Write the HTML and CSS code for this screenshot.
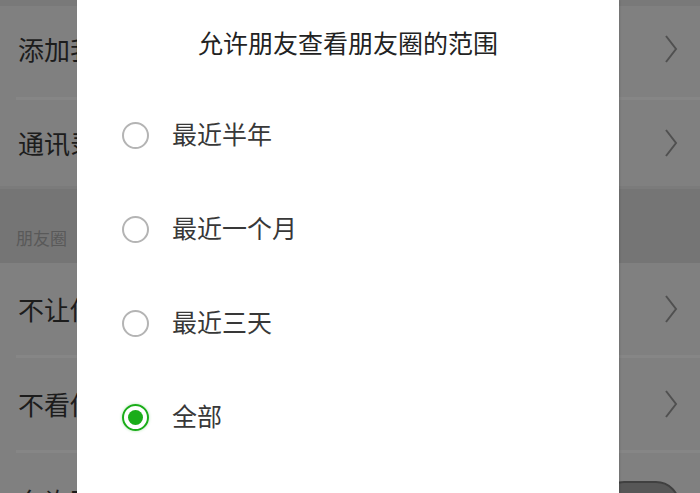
FILE: index.html
```html
<!DOCTYPE html>
<html lang="zh-CN">
<head>
<meta charset="utf-8">
<title>朋友圈权限</title>
<link rel="stylesheet" href="styles.css">
</head>
<body>
<div class="page">
  <div class="settings">
    <div class="gap-top"></div>
    <div class="row row-first">
      <span class="row-label">添加我的方式</span>
      <svg class="chevron" viewBox="0 0 14 30" width="14" height="30"><polyline points="2,2 12,15 2,28" /></svg>
    </div>
    <div class="sep"></div>
    <div class="row row-second">
      <span class="row-label">通讯录黑名单</span>
      <svg class="chevron" viewBox="0 0 14 30" width="14" height="30"><polyline points="2,2 12,15 2,28" /></svg>
    </div>
    <div class="section-head"><span>朋友圈</span></div>
    <div class="row">
      <span class="row-label">不让他(她)看</span>
      <svg class="chevron" viewBox="0 0 14 30" width="14" height="30"><polyline points="2,2 12,15 2,28" /></svg>
    </div>
    <div class="sep"></div>
    <div class="row">
      <span class="row-label">不看他(她)</span>
      <svg class="chevron" viewBox="0 0 14 30" width="14" height="30"><polyline points="2,2 12,15 2,28" /></svg>
    </div>
    <div class="sep"></div>
    <div class="row row-switch">
      <span class="row-label">允许陌生人查看十条朋友圈</span>
      <span class="switch"></span>
    </div>
  </div>

  <div class="dialog">
    <div class="dialog-title">允许朋友查看朋友圈的范围</div>
    <div class="options">
      <div class="option"><span class="radio"></span><span class="option-label">最近半年</span></div>
      <div class="option"><span class="radio"></span><span class="option-label">最近一个月</span></div>
      <div class="option"><span class="radio"></span><span class="option-label">最近三天</span></div>
      <div class="option"><span class="radio radio-checked"></span><span class="option-label">全部</span></div>
    </div>
  </div>
</div>
</body>
</html>
```

FILE: styles.css
```css
* { box-sizing: border-box; }

html, body {
  margin: 0;
  padding: 0;
}

body {
  width: 700px;
  height: 493px;
  overflow: hidden;
  font-family: "Noto Sans CJK SC", "Noto Sans", sans-serif;
  background: #808080;
}

.page {
  position: relative;
  width: 700px;
  height: 493px;
  overflow: hidden;
}

/* dimmed settings list behind the dialog */
.settings {
  display: flex;
  flex-direction: column;
}

.gap-top {
  height: 6px;
  background: #797979;
}

.row {
  height: 92px;
  flex-shrink: 0;
  display: flex;
  align-items: center;
  justify-content: space-between;
  padding: 0 22px 0 18px;
  background: #808080;
}

.row-first {
  height: 91px;
  padding-bottom: 5px;
}

.row-second {
  height: 86px;
}

.row-switch {
  align-items: flex-start;
  padding-top: 31px;
  padding-right: 20px;
}

.row-label {
  font-size: 26px;
  line-height: 34px;
  color: #1c1c1c;
  white-space: nowrap;
}

.chevron {
  display: block;
  fill: none;
  stroke: #505050;
  stroke-width: 2;
}

.sep {
  height: 3px;
  flex-shrink: 0;
  margin-left: 16px;
  background: #868686;
}

.section-head {
  height: 77px;
  flex-shrink: 0;
  background: #757575;
  display: flex;
  align-items: flex-end;
  padding: 0 0 13px 16px;
  border-top: 3px solid #7b7b7b;
}

.section-head span {
  font-size: 17px;
  line-height: 24px;
  color: #595959;
}

.switch {
  display: block;
  flex-shrink: 0;
  width: 80px;
  height: 48px;
  margin-top: -3px;
  border-radius: 24px;
  background: #575757;
  border: 2px solid #404040;
}

/* dialog on top of the dimmed page */
.dialog {
  position: absolute;
  left: 77px;
  top: 0;
  width: 542px;
  height: 493px;
  background: #fff;
  box-shadow: 1px 0 2px rgba(0, 0, 0, 0.12);
}

.dialog-title {
  margin-top: 25px;
  font-size: 25px;
  line-height: 35px;
  text-align: center;
  color: #222;
}

.options {
  margin-top: 28px;
  display: flex;
  flex-direction: column;
}

.option {
  height: 94px;
  display: flex;
  align-items: center;
  gap: 23px;
  padding-left: 45px;
}

.option-label {
  font-size: 25px;
  line-height: 35px;
  color: #383838;
  margin-top: -3px;
}

.radio {
  width: 27px;
  height: 27px;
  border-radius: 50%;
  border: 2px solid #b4b4b4;
  flex-shrink: 0;
  position: relative;
}

.radio-checked {
  border-color: #1aad19;
  box-shadow: 0 0 3px rgba(26, 173, 25, 0.35);
}

.radio-checked::after {
  content: "";
  position: absolute;
  left: 4px;
  top: 4px;
  width: 15px;
  height: 15px;
  border-radius: 50%;
  background: #1aad19;
}
```
